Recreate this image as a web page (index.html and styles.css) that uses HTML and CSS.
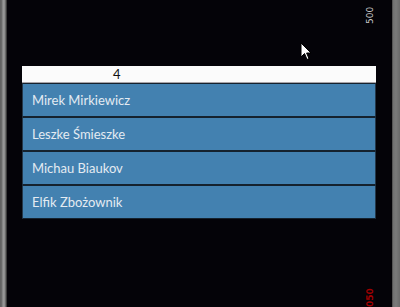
FILE: index.html
```html
<!DOCTYPE html>
<html>
<head>
<meta charset="utf-8">
<link rel="stylesheet" href="styles.css">
</head>
<body>
<div class="frame">
  <div class="edge edge-left"></div>
  <div class="screen">
    <div class="header">4</div>
    <div class="list">
      <div class="row">Mirek Mirkiewicz</div>
      <div class="row">Leszke Śmieszke</div>
      <div class="row">Michau Biaukov</div>
      <div class="row">Elfik Zbożownik</div>
    </div>
    <div class="tag tag-top">500</div>
    <div class="tag tag-bottom">050</div>
    <svg class="cursor" width="12" height="19" viewBox="0 0 12 19">
      <path d="M1 1 L1 15 L4.5 11.5 L7 17.5 L9 16.6 L6.6 11 L11 11 Z" fill="#fff" stroke="#000" stroke-width="1"/>
    </svg>
  </div>
  <div class="edge edge-right"></div>
</div>
</body>
</html>
```
FILE: styles.css
```css
html, body {
  margin: 0;
  padding: 0;
  background: #040308;
}
.frame {
  display: flex;
  width: 400px;
  height: 307px;
  overflow: hidden;
}
.edge {
  flex: none;
  height: 100%;
}
.edge-left {
  width: 7px;
  background: linear-gradient(to right, #5e5e5e 0, #6e6e6e 2px, #9a9a9a 3px, #8a8a8a 5px, #4a4a4a 6px, #2a2a2a 7px);
}
.edge-right {
  width: 8px;
  background: linear-gradient(to right, #3a3a3a 0, #707070 1px, #7a7a7a 4px, #6a6a6a 8px);
}
.screen {
  position: relative;
  flex: 1;
  padding: 66px 16px 0 15px;
  font-family: "Lato", "Open Sans", sans-serif;
}
.header {
  height: 16px;
  background: #fbfbfb;
  border-bottom: 1px solid #a8a4a8;
  font-size: 13px;
  line-height: 17px;
  color: #111;
  padding-left: 91px;
}
.list {
  display: flex;
  flex-direction: column;
}
.row {
  height: 32px;
  background: #4381b0;
  border: 1px solid #15222e;
  border-left-color: #24384a;
  border-right-color: #24384a;
  color: #e3ebf2;
  font-size: 13px;
  line-height: 32px;
  padding-left: 9px;
}
.tag {
  position: absolute;
  left: 358px;
  font-family: "DejaVu Sans", sans-serif;
  font-size: 9px;
  transform: rotate(-90deg);
  transform-origin: left top;
}
.tag-top {
  top: 24px;
  color: #c8c8c8;
}
.tag-bottom {
  top: 307px;
  color: #a00000;
  font-weight: bold;
}
.cursor {
  position: absolute;
  left: 293px;
  top: 42px;
}
```
